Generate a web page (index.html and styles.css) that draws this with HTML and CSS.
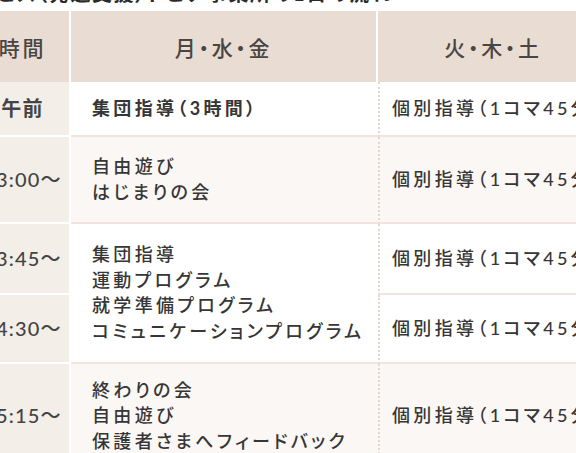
FILE: index.html
```html
<!DOCTYPE html>
<html lang="ja">
<head>
<meta charset="utf-8">
<title>1日の流れ</title>
<link rel="stylesheet" href="styles.css">
</head>
<body>
<div class="page">
  <h2 class="title">ービス（発達支援）ドピア事業所の1日の流れ</h2>
  <table class="schedule">
    <colgroup>
      <col class="col-time">
      <col class="col-mid">
      <col class="col-right">
    </colgroup>
    <thead>
      <tr>
        <th class="th-time">時間</th>
        <th class="th-mid">月・水・金</th>
        <th class="th-right">火・木・土</th>
      </tr>
    </thead>
    <tbody>
      <tr class="r1">
        <td class="time strong">午前</td>
        <td class="mid strong">集団指導（3時間）</td>
        <td class="right">個別指導（1コマ45分）</td>
      </tr>
      <tr class="r2 tint">
        <td class="time">13:00～</td>
        <td class="mid">自由遊び<br>はじまりの会</td>
        <td class="right">個別指導（1コマ45分）</td>
      </tr>
      <tr class="r3">
        <td class="time">13:45～</td>
        <td class="mid" rowspan="2">集団指導<br>運動プログラム<br>就学準備プログラム<br>コミュニケーションプログラム</td>
        <td class="right">個別指導（1コマ45分）</td>
      </tr>
      <tr class="r4">
        <td class="time">14:30～</td>
        <td class="right">個別指導（1コマ45分）</td>
      </tr>
      <tr class="r5 tint">
        <td class="time">15:15～</td>
        <td class="mid">終わりの会<br>自由遊び<br>保護者さまへフィードバック</td>
        <td class="right">個別指導（1コマ45分）</td>
      </tr>
    </tbody>
  </table>
</div>
</body>
</html>
```
FILE: styles.css
```css
html, body {
  margin: 0;
  padding: 0;
  background: #ffffff;
}
body {
  font-family: Lato, "Noto Sans CJK JP", sans-serif;
  font-feature-settings: "palt";
  color: #363636;
  overflow: hidden;
}
.page {
  margin-left: -24px;
}
.title {
  margin: -17px 0 8px 0;
  font-size: 20px;
  line-height: 20px;
  font-weight: 700;
  letter-spacing: 0.08em;
  white-space: nowrap;
  color: #2a2a2a;
}
.schedule {
  border-collapse: separate;
  border-spacing: 0;
  table-layout: fixed;
  width: 632px;
}
.col-time { width: 95px; }
.col-mid { width: 307px; }
.col-right { width: 230px; }

th {
  background: #e9dcd3;
  height: 71px;
  padding: 0;
  font-size: 21px;
  font-weight: 500;
  color: #4a4542;
  text-align: center;
  letter-spacing: 0.13em;
}
.th-time, .th-mid {
  border-right: 2px solid #ffffff;
}
td {
  padding: 0 12px 0 21px;
  font-size: 18px;
  font-weight: 500;
  line-height: 25.5px;
  letter-spacing: 0.185em;
  vertical-align: middle;
  border-bottom: 2px solid #f1e4dc;
  white-space: nowrap;
}
td.time {
  background: #f4eee9;
  padding: 0;
  text-align: center;
  font-size: 20px;
  font-weight: 500;
  letter-spacing: 0.06em;
  border-right: 2px solid #ffffff;
  border-bottom-color: #ffffff;
  color: #444;
}
td.right {
  padding-left: 12px;
  border-left: 2px dotted #e6d6cc;
}
td.strong {
  font-weight: 700;
}
.tint td.mid, .tint td.right {
  background: #fbf7f5;
}
.r1 { height: 55px; }
.r2 { height: 87px; }
.r3 { height: 71px; }
.r4 { height: 69px; }
.r5 { height: 106px; }
```
